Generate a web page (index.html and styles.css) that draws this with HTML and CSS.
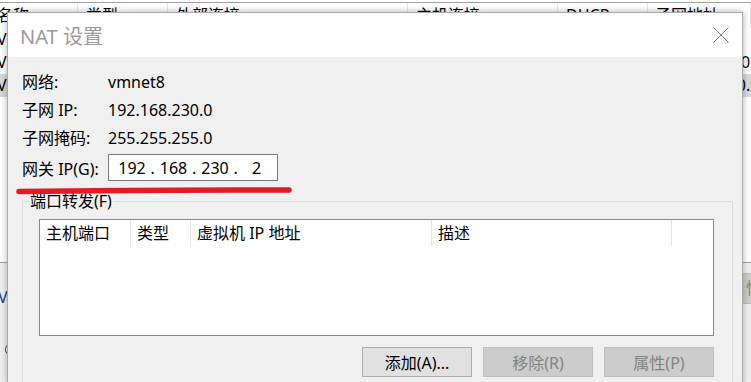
FILE: index.html
```html
<!DOCTYPE html>
<html lang="zh-CN">
<head>
  <meta charset="UTF-8" />
  <title>NAT 设置</title>
  <link rel="stylesheet" href="styles.css">
</head>
<body>
  <div class="behind">
    <div class="bg-head">
      <span class="c c1">名称</span>
      <span class="c c2">类型</span>
      <span class="c c3">外部连接</span>
      <span class="c c4">主机连接</span>
      <span class="c c5">DHCP</span>
      <span class="c c6">子网地址</span>
    </div>
    <div class="bg-row">
      <span class="c c1">VMnet0</span>
      <span class="c c2">桥接模式</span>
      <span class="c c3">自动桥接</span>
      <span class="c c4">-</span>
      <span class="c c5">-</span>
      <span class="c c6"></span>
    </div>
    <div class="bg-row">
      <span class="c c1">VMnet1</span>
      <span class="c c2">仅主机...</span>
      <span class="c c3">-</span>
      <span class="c c4">已连接</span>
      <span class="c c5">已启用</span>
      <span class="c c6">192.168.56.0</span>
    </div>
    <div class="bg-row sel">
      <span class="c c1">VMnet8</span>
      <span class="c c2">NAT 模式</span>
      <span class="c c3">NAT 模式</span>
      <span class="c c4">已连接</span>
      <span class="c c5">已启用</span>
      <span class="c c6">192.168.230.0</span>
    </div>
    <div class="bg-space"></div>
    <div class="bg-lower">
      <div class="bg-info">
        <p class="bg-title">VMnet 信息</p>
        <p class="bg-radio"><span class="radio"></span>桥接模式</p>
      </div>
      <span class="bg-btn">恢复</span>
    </div>
  </div>

  <div class="dialog">
    <div class="titlebar">
      <span class="title">NAT 设置</span>
      <svg class="close" width="16" height="16" viewBox="0 0 16 16">
        <path d="M0.5 0.5 L15.5 15.5 M15.5 0.5 L0.5 15.5" stroke="#7c7c7c" stroke-width="1" fill="none"/>
      </svg>
    </div>

    <div class="body">
      <div class="info">
        <span>网络:</span><span>vmnet8</span>
        <span>子网 IP:</span><span>192.168.230.0</span>
        <span>子网掩码:</span><span>255.255.255.0</span>
      </div>
      <div class="gw">
        <span>网关 IP(G):</span>
        <div class="ipbox">
          <span class="oct">192</span><span class="dot">.</span>
          <span class="oct">168</span><span class="dot">.</span>
          <span class="oct">230</span><span class="dot">.</span>
          <span class="oct">2</span>
        </div>
      </div>

      <fieldset class="group">
        <legend>端口转发(F)</legend>
        <div class="list">
          <div class="list-head">
            <span class="h h1">主机端口</span>
            <span class="h h2">类型</span>
            <span class="h h3">虚拟机 IP 地址</span>
            <span class="h h4">描述</span>
          </div>
        </div>
        <div class="actions">
          <button class="btn">添加(A)...</button>
          <button class="btn" disabled>移除(R)</button>
          <button class="btn" disabled>属性(P)</button>
        </div>
      </fieldset>
    </div>
  </div>

  <svg class="mark" width="751" height="382" viewBox="0 0 751 382">
    <path d="M19 191.5 Q150 189.5 289 190" stroke="#e51b24" stroke-width="5.5" stroke-linecap="round" fill="none"/>
  </svg>
</body>
</html>
```

FILE: styles.css
```css
* {
  box-sizing: border-box;
  margin: 0;
  padding: 0;
}

body {
  width: 751px;
  height: 382px;
  overflow: hidden;
  position: relative;
  background: #fff;
  color: #000;
  font-family: "Noto Sans", "Noto Sans CJK SC", sans-serif;
  font-size: 16px;
}

/* window behind the dialog */
.behind {
  height: 382px;
  display: flex;
  flex-direction: column;
}

.bg-head {
  margin-top: 2px;
  border-top: 1px solid #a0a0a0;
  height: 26px;
  display: flex;
}

.bg-head .c {
  line-height: 25px;
  border-right: 1px solid #e5e5e5;
}

.bg-row {
  height: 23px;
  line-height: 23px;
  display: flex;
}

.bg-row.sel {
  background: #d9d9d9;
}

.c {
  flex: none;
  padding-left: 8px;
  white-space: nowrap;
  overflow: hidden;
}

.c1 { width: 81px; margin-left: -3px; padding-left: 0; }
.c2 { width: 90px; }
.c3 { width: 240px; }
.c4 { width: 150px; }
.c5 { width: 90px; }
.c6 { width: 103px; padding-left: 7px; }

.bg-space {
  flex: 1;
}

.bg-lower {
  height: 120px;
  flex: none;
  border-top: 1px solid #a0a0a0;
  background: #f0f0f0;
  display: flex;
}

.bg-info {
  margin-left: -2px;
}

.bg-title {
  margin-top: 24px;
  line-height: 20px;
  color: #1a3a8a;
}

.bg-radio {
  margin-top: 32px;
  margin-left: 7px;
  display: flex;
  align-items: center;
  gap: 6px;
  line-height: 20px;
}

.radio {
  width: 13px;
  height: 13px;
  border: 1px solid #333;
  border-radius: 50%;
  background: #fff;
}

.bg-btn {
  margin-left: auto;
  margin-right: -70px;
  margin-top: 10px;
  width: 80px;
  height: 31px;
  background: #cccccc;
  border: 1px solid #bfbfbf;
  color: #838383;
  line-height: 29px;
  padding-left: 4px;
}

/* NAT dialog */
.dialog {
  position: absolute;
  left: 7px;
  top: 12px;
  width: 736px;
  height: 372px;
  overflow: hidden;
  background: #f0f0f0;
  border: 1px solid #ababab;
  box-shadow: 0 0 7px rgba(0, 0, 0, 0.3);
  display: flex;
  flex-direction: column;
}

.titlebar {
  height: 44px;
  flex: none;
  background: #fff;
  display: flex;
  align-items: center;
  justify-content: space-between;
  padding-left: 12px;
  padding-right: 13px;
}

.title {
  font-size: 20px;
  color: #9a9a9a;
}

.close {
  display: block;
}

.body {
  padding: 11px 9px 0 14px;
}

.info,
.gw {
  display: grid;
  grid-template-columns: 86px auto;
  align-items: center;
}

.info span {
  height: 28px;
  line-height: 28px;
}

.gw {
  margin-top: 2px;
}

.ipbox {
  width: 170px;
  height: 27px;
  border: 1px solid #7a7a7a;
  background: #fff;
  display: flex;
  align-items: center;
  padding-left: 9px;
}

.oct {
  width: 28px;
  text-align: center;
}

.dot {
  width: 13.5px;
  text-align: center;
}

.group {
  margin-top: 10px;
  border: 1px solid #dcdcdc;
  padding: 0 18px 30px 16px;
}

.group legend {
  margin-left: -10px;
  padding: 0 1px;
  line-height: 20px;
}

.list {
  margin-top: 8px;
  height: 117px;
  border: 1px solid #828790;
  background: #fff;
}

.list-head {
  display: flex;
  height: 26px;
}

.h {
  flex: none;
  padding-left: 6px;
  line-height: 26px;
  border-right: 1px solid #e5e5e5;
}

.h1 { width: 91px; }
.h2 { width: 60px; }
.h3 { width: 241px; }
.h4 { width: 240px; }

.actions {
  margin-top: 11px;
  display: flex;
  justify-content: flex-end;
  gap: 11px;
}

.btn {
  width: 110px;
  height: 30px;
  background: #e1e1e1;
  border: 1px solid #adadad;
  font-family: inherit;
  font-size: 16px;
  color: #000;
}

.btn:disabled {
  background: #cccccc;
  border-color: #bfbfbf;
  color: #838383;
}

.mark {
  position: absolute;
  left: 0;
  top: 0;
  pointer-events: none;
}
```
